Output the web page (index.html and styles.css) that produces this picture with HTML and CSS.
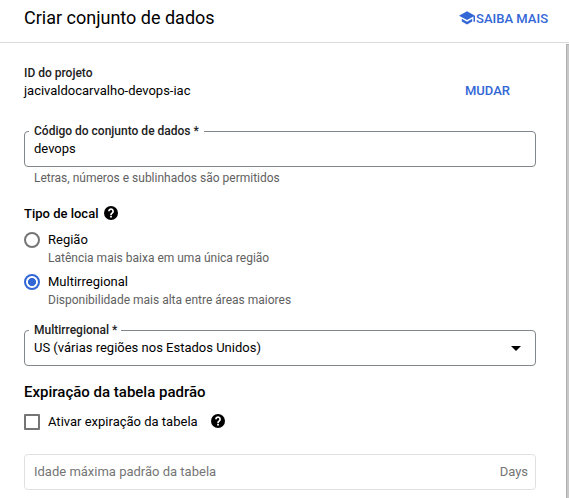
FILE: index.html
```html
<!DOCTYPE html>
<html lang="pt-BR">
<head>
<meta charset="utf-8">
<title>Criar conjunto de dados</title>
<link rel="stylesheet" href="styles.css">
</head>
<body>
<header class="header">
  <h1 class="title">Criar conjunto de dados</h1>
  <a class="action learn"><svg class="cap" width="16" height="14" viewBox="0 0 16 14"><path d="M0 4.7 8 .3l8 4.4v6.1h-1.5V5.5L8 9.1z"/><path d="M2.8 7.8 8 10.7l5.2-2.9v2.8L8 13.5l-5.2-2.9z"/></svg><span>SAIBA MAIS</span></a>
</header>
<div class="body">
  <main class="form">
    <section class="project">
      <div>
        <div class="caption">ID do projeto</div>
        <div class="value">jacivaldocarvalho-devops-iac</div>
      </div>
      <a class="action change">MUDAR</a>
    </section>
    <div class="field"><span class="label">Código do conjunto de dados *</span><span>devops</span></div>
    <div class="hint field-hint">Letras, números e sublinhados são permitidos</div>
    <div class="group-title"><span>Tipo de local</span><svg class="help" width="14" height="14" viewBox="0 0 14 14"><circle cx="7" cy="7" r="7"/><path class="mark" d="M4.9 5.3a2.1 2.1 0 1 1 3.4 1.6C7.5 7.5 7 7.9 7 9"/><path class="dot" d="M6.1 9.8h1.8v1.7H6.1z"/></svg></div>
    <div class="option"><span class="radio"></span><div><div class="option-name">Região</div><div class="hint">Latência mais baixa em uma única região</div></div></div>
    <div class="option"><span class="radio checked"></span><div><div class="option-name">Multirregional</div><div class="hint">Disponibilidade mais alta entre áreas maiores</div></div></div>
    <div class="field select"><span class="label">Multirregional *</span><span>US (várias regiões nos Estados Unidos)</span><svg class="arrow" width="10" height="5" viewBox="0 0 10 5"><path d="M0 0h10L5 5z"/></svg></div>
    <h2 class="section">Expiração da tabela padrão</h2>
    <div class="check-row"><span class="checkbox"></span><span>Ativar expiração da tabela</span><svg class="help" width="14" height="14" viewBox="0 0 14 14"><circle cx="7" cy="7" r="7"/><path class="mark" d="M4.9 5.3a2.1 2.1 0 1 1 3.4 1.6C7.5 7.5 7 7.9 7 9"/><path class="dot" d="M6.1 9.8h1.8v1.7H6.1z"/></svg></div>
    <div class="field disabled"><span>Idade máxima padrão da tabela</span><span>Days</span></div>
  </main>
  <div class="scrollbar"></div>
</div>
</body>
</html>
```
FILE: styles.css
```css
* { box-sizing: border-box; }
body {
  margin: 0;
  height: 498px;
  overflow: hidden;
  background: #fff;
  color: #000;
  font: 13px/18px Roboto, sans-serif;
}
.header {
  display: flex;
  justify-content: space-between;
  height: 43px;
  padding: 6px 21px 0 24px;
  border-bottom: 1px solid #dadada;
}
.title { margin: 0; font-size: 18px; line-height: 24px; font-weight: 400; }
.action { color: #3367d6; font-weight: 500; }
.learn { display: flex; height: 26px; align-items: center; }
.cap { fill: #3367d6; margin: 0 1px 2px 0; }
.body { display: flex; height: 455px; }
.form { flex: 1; padding: 21px 30px 0 24px; }
.scrollbar { width: 3px; margin-top: 1px; background: #c8c8c8; border-left: 1px solid #b0b0b0; border-top: 1px solid #b0b0b0; }
.project { display: flex; justify-content: space-between; align-items: flex-end; height: 36px; padding-right: 26px; }
.caption { font-size: 12px; font-weight: 500; color: #212121; }
.value { letter-spacing: -0.01px; }
.field {
  position: relative;
  display: flex;
  justify-content: space-between;
  align-items: center;
  width: 512px;
  height: 36px;
  margin-top: 31px;
  padding: 0 8px 0 9px;
  border: 1px solid #80868b;
  border-radius: 4px;
}
.label {
  position: absolute;
  top: -9px;
  left: 4px;
  padding: 0 5px;
  background: #fff;
  color: #212121;
  font-size: 12px;
  line-height: 16px;
  font-weight: 500;
}
.select .label { padding-right: 4px; }
.hint { font-size: 12px; color: #616161; }
.field-hint { margin: 2px 0 0 10px; }
.group-title { display: flex; align-items: center; gap: 6px; margin: 18px 0 8px; font-weight: 500; }
.group-title .help { margin-bottom: 2px; }
.help { fill: #000; }
.mark { fill: none; stroke: #fff; stroke-width: 1.7; }
.dot { fill: #fff; }
.option { display: flex; gap: 8px; height: 42px; }
.radio { width: 16px; height: 16px; margin-top: 1px; border: 2px solid #757575; border-radius: 50%; }
.checked { border-color: #3367d6; background: radial-gradient(circle, #3367d6 3.7px, #fff 4.4px); }
.select { margin-top: 15px; }
.arrow { margin-right: 6px; }
.section { margin: 16px 0 0; font-size: 15px; line-height: 20px; font-weight: 500; }
.check-row { display: flex; align-items: center; height: 18px; margin-top: 11px; gap: 8px; }
.check-row .help { margin: 0 0 2px 5px; }
.checkbox { width: 16px; height: 16px; border: 2px solid #757575; border-radius: 1px; }
.disabled { margin-top: 23px; border-color: #e0e0e0; color: #757575; padding-right: 7px; }
```
